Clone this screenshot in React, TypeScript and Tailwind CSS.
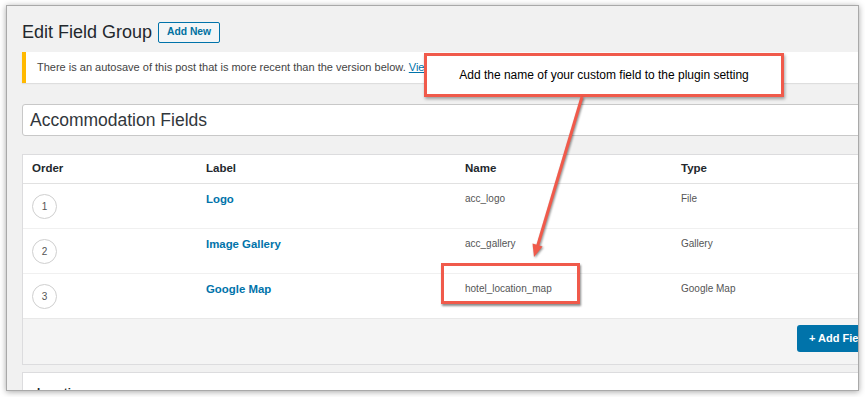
import React from "react";

const rows = [
  { n: "1", label: "Logo", name: "acc_logo", type: "File" },
  { n: "2", label: "Image Gallery", name: "acc_gallery", type: "Gallery" },
  { n: "3", label: "Google Map", name: "hotel_location_map", type: "Google Map" },
];

export default function App() {
  return (
    <div
      className="relative w-[865px] h-[397px] bg-white overflow-hidden pt-[5px] pl-[6px]"
      style={{ fontFamily: '"Liberation Sans", Arial, sans-serif' }}
    >
      {/* screenshot frame */}
      <div className="w-[853px] h-[386px] border border-[#a9a9a9] bg-[#f1f1f1] overflow-hidden shadow-[0_1px_6px_rgba(0,0,0,0.35)]">
        <div className="w-[868px] ml-[15px]">
          {/* heading */}
          <div className="flex items-center gap-[6px] mt-[16px] h-[21px]">
            <h1 className="text-[18px] leading-[21px] text-[#23282d] font-normal">Edit Field Group</h1>
            <button className="h-[21px] px-[8px] border border-[#0073aa] rounded-[2px] bg-[#f3f5f6] text-[#0071a1] text-[10.3px] font-bold leading-none">
              Add New
            </button>
          </div>

          {/* notice */}
          <div className="mt-[9px] h-[31px] bg-white border-l-[4px] border-[#ffb900] shadow-[0_1px_1px_rgba(0,0,0,0.08)] flex items-center pl-[11px]">
            <p className="text-[11px] text-[#444]">
              There is an autosave of this post that is more recent than the version below.{" "}
              <span className="text-[#0073aa] underline">View the autosave</span>
            </p>
          </div>

          {/* title input */}
          <div className="mt-[21px] h-[32px] bg-white border border-[#c8c8c8] rounded-[3px] flex items-center pl-[7px]">
            <span className="text-[17.5px] text-[#32373c]">Accommodation Fields</span>
          </div>

          {/* fields table */}
          <div className="mt-[18px] bg-white border border-[#dcdcde]">
            <div className="grid grid-cols-[183px_259px_216px_1fr] h-[29px] items-center border-b border-[#e1e1e1] text-[11.5px] font-bold text-[#23282d]">
              <div className="pl-[9px]">Order</div>
              <div>Label</div>
              <div>Name</div>
              <div>Type</div>
            </div>
            {rows.map((r, i) => (
              <div
                key={r.n}
                className={`grid grid-cols-[183px_259px_216px_1fr] ${i === 2 ? "h-[44px]" : "h-[45px] border-b border-[#f0f0f0]"}`}
              >
                <div className="pl-[9px] flex items-center">
                  <div className="w-[25px] h-[25px] rounded-full border border-[#cfcfcf] flex items-center justify-center text-[10px] text-[#555]">
                    {r.n}
                  </div>
                </div>
                <div className="pt-[8px] leading-[14px] text-[11.4px] font-bold text-[#0073aa]">{r.label}</div>
                <div className="pt-[8px] leading-[14px] text-[10px] text-[#555]">{r.name}</div>
                <div className="pt-[8px] leading-[14px] text-[10px] text-[#555]">{r.type}</div>
              </div>
            ))}
            <div className="h-[46px] bg-[#f4f4f4] border-t border-[#e8e8e8] flex justify-end items-start pt-[6px] pr-[12px]">
              <button className="w-[80px] h-[27px] rounded-[3px] bg-[#0073aa] text-white text-[11px] font-bold text-left pl-[12px]">
                + Add Field
              </button>
            </div>
          </div>

          {/* location */}
          <div className="mt-[7px] h-[40px] bg-white border border-[#dcdcde] pl-[14px] pt-[6px]">
            <span className="text-[11.5px] leading-[14px] text-[#23282d] font-bold">Location</span>
          </div>
        </div>
      </div>

      {/* callout */}
      <div className="absolute left-[424px] top-[53px] w-[360px] h-[44px] bg-white border-[3px] border-[#f05a4b] shadow-[1px_2px_3px_rgba(0,0,0,0.35)] flex items-center justify-center">
        <span className="text-[12px] text-black">Add the name of your custom field to the plugin setting</span>
      </div>

      {/* highlight box */}
      <div className="absolute left-[441px] top-[263px] w-[139px] h-[41px] border-[3px] border-[#f05a4b] shadow-[1px_2px_2px_rgba(0,0,0,0.45)]" />

      {/* arrow */}
      <svg
        className="absolute left-0 top-0 drop-shadow-[1px_1px_1px_rgba(0,0,0,0.45)]"
        width="865"
        height="397"
        viewBox="0 0 865 397"
      >
        <line x1="582" y1="97" x2="537.6" y2="246" stroke="#f05a4b" strokeWidth="3" />
        <polygon points="534,257 542.5,246.5 532.5,243.5" fill="#f05a4b" />
      </svg>
    </div>
  );
}
